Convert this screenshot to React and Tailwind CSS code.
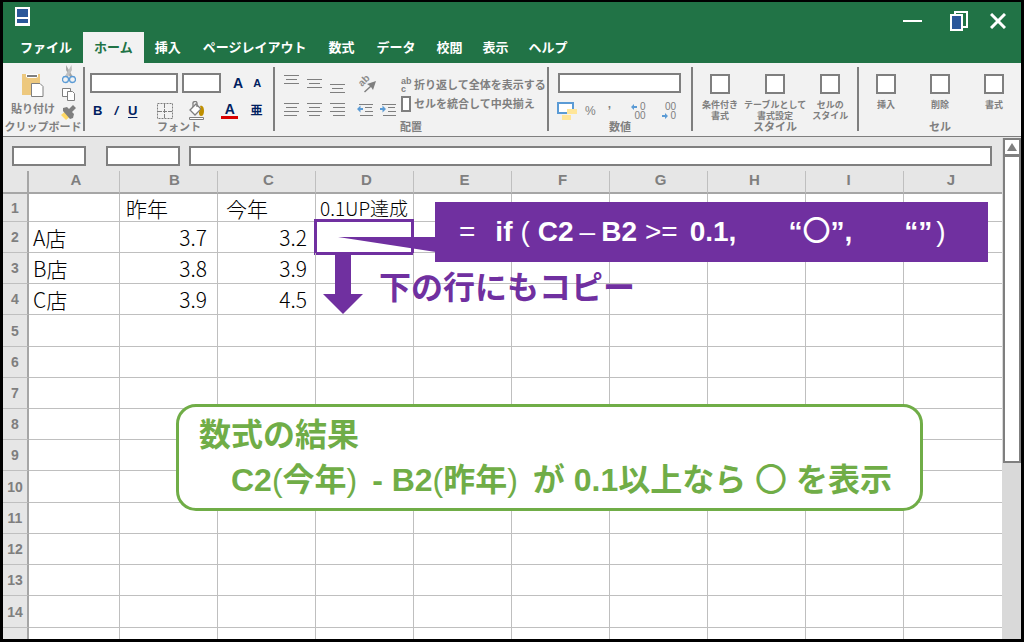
import React, { useState } from "react";

const tabs = [
  { name: "ファイル", pad: "px-[11px]" },
  { name: "ホーム", pad: "px-[11px]" },
  { name: "挿入", pad: "px-[11px]" },
  { name: "ページレイアウト", pad: "px-[11px]" },
  { name: "数式", pad: "px-[11px]" },
  { name: "データ", pad: "px-[11px]" },
  { name: "校閲", pad: "px-[10px]" },
  { name: "表示", pad: "px-[10px]" },
  { name: "ヘルプ", pad: "px-[10px]" },
];

const columns = [
  { name: "A", pad: "pl-1" },
  { name: "B", pad: "pl-3" },
  { name: "C", pad: "pl-1" },
  { name: "D", pad: "pl-1" },
  { name: "E", pad: "pl-1" },
  { name: "F", pad: "pl-1" },
  { name: "G", pad: "pl-1" },
  { name: "H", pad: "pr-1" },
  { name: "I", pad: "pr-3" },
  { name: "J", pad: "pr-1" },
];

const rows = [
  { no: 1, height: "h-7", cells: ["", "昨年", "今年", "0.1UP達成"] },
  { no: 2, height: "h-[31px]", cells: ["A店", "3.7", "3.2"] },
  { no: 3, height: "h-[31px]", cells: ["B店", "3.8", "3.9"] },
  { no: 4, height: "h-[31px]", cells: ["C店", "3.9", "4.5"] },
  { no: 5, height: "h-8", cells: [] },
  { no: 6, height: "h-[31px]", cells: [] },
  { no: 7, height: "h-[31px]", cells: [] },
  { no: 8, height: "h-[31px]", cells: [] },
  { no: 9, height: "h-[31px]", cells: [] },
  { no: 10, height: "h-8", cells: [] },
  { no: 11, height: "h-[31px]", cells: [] },
  { no: 12, height: "h-[31px]", cells: [] },
  { no: 13, height: "h-[31px]", cells: [] },
  { no: 14, height: "h-8", cells: [] },
];

const boxClass = "h-5 border-2 border-[#7f7f7f] bg-white";

// Horizontal line icon, each line is [x1, x2, y]
const LinesIcon = ({ lines, arrow }) => (
  <svg width="16" height="20" viewBox="0 0 16 20" fill="none">
    {lines.map(([x1, x2, y]) => (
      <path key={y} d={`M${x1} ${y}.5H${x2}`} stroke="#7f7f7f" />
    ))}
    {arrow === "left" && <path d="M0 8l3.500-3.500V7H6v2H3.500v2.500z" fill="#5b9bd5" />}
    {arrow === "right" && <path d="M6 8L2.500 4.500V7H0v2h2.500v2.500z" fill="#5b9bd5" />}
  </svg>
);

const SmallArrow = ({ dir }) => (
  <svg width="6" height="6" viewBox="0 0 6 6" fill="#5b9bd5">
    {dir === "left" ? <path d="M0 3l3-3v2h3v2H3v2z" /> : <path d="M6 3L3 0v2H0v2h3v2z" />}
  </svg>
);

const PasteIcon = () => (
  <svg width="22" height="24" viewBox="0 0 22 24">
    <rect x="0" y="1" width="18" height="21" fill="#edc87e" />
    <path d="M4 1h12v3l-2 1H6L4 4z" fill="#fff" />
    <rect x="5" y="2" width="10" height="2" fill="#7f7f7f" />
    <path d="M9.500 10.500h8.500l3 3v10H9.500z" fill="#fff" stroke="#7f7f7f" />
  </svg>
);

const CutIcon = () => (
  <svg width="14" height="19" viewBox="0 0 14 19" fill="none">
    <path d="M4 0l3.500 6 3.500 6H8L4 5z" fill="#a6a6a6" />
    <path d="M9.500 0L6 6l-3.500 6H6l4-7z" fill="#bfbfbf" />
    <circle cx="3.500" cy="14.500" r="3" stroke="#5b9bd5" strokeWidth="1.300" />
    <circle cx="10.500" cy="14.500" r="3" stroke="#5b9bd5" strokeWidth="1.300" />
  </svg>
);

const CopyIcon = () => (
  <svg width="14" height="13" viewBox="0 0 14 13" fill="#fff" stroke="#7f7f7f">
    <path d="M.5.5h8v8h-8z" />
    <path d="M5.500 3.500h5l2 2v7h-7z" />
  </svg>
);

const BrushIcon = () => (
  <svg width="16" height="15" viewBox="0 0 16 15">
    <path d="M0 10l3.500-3 5 5L5 15z" fill="#ffd966" />
    <path d="M2 3l4-1 2 2 4-4 3 3-4 4 2 2-1 4-3 1-7-8z" fill="#7f7f7f" />
  </svg>
);

const BordersIcon = () => (
  <svg width="16" height="17" viewBox="0 0 16 17" fill="none" stroke="#7f7f7f">
    <path d="M.5.5h15v15H.5z" strokeDasharray="2 1" />
    <path d="M7.500 1v15M1 8.500h15" strokeDasharray="4 1" />
  </svg>
);

const BucketIcon = () => (
  <svg width="16" height="20" viewBox="0 0 16 20" fill="none" stroke="#7f7f7f">
    <path d="M7 3l5 5-6 6-5-5z" fill="#fff" strokeWidth="1.300" />
    <path d="M4 6V3a2 2 0 0 1 4-1v4" strokeWidth="1.300" />
    <path d="M11 5c3-1 4 2 4 5s-1 5-3 5-2-3-2-4l2-3z" fill="#bf8f00" stroke="none" />
    <path d="M.5 16.500h14v2H.5z" fill="#fff" />
  </svg>
);

const OrientationIcon = () => (
  <svg width="20" height="20" viewBox="0 0 20 20" overflow="visible">
    <text x="5" y="14" fontSize="10" fontWeight="700" fill="#8c8c8c" transform="rotate(-45 5 14)">
      ab
    </text>
    <path d="M7 18.500l6-5.500-3-2 9-3-3 9-2-3-6 5.500z" fill="#7f7f7f" />
  </svg>
);

const MoneyIcon = () => (
  <svg width="20" height="18" viewBox="0 0 20 18">
    <rect x="1" y="1" width="15" height="10" fill="#fff" stroke="#5b9bd5" strokeWidth="2" />
    <rect x="10" y="7" width="10" height="5" fill="#ffe699" />
    <rect x="5" y="13" width="9" height="5" fill="#ffe699" />
  </svg>
);

const Group = ({ label, className, children }) => (
  <section aria-label={label} className={`flex flex-col justify-between ${className}`}>
    {children}
    <h2 className="text-center text-[11px] leading-2 font-bold whitespace-nowrap">{label}</h2>
  </section>
);

const BoxButton = ({ lines, className = "" }) => (
  <button className={`flex flex-col items-center gap-1.5 ${className}`}>
    <span className={`w-5 ${boxClass}`} />
    <span className="text-[9px] leading-[11px] font-bold whitespace-nowrap">
      {lines.map((line) => (
        <span key={line} className="block">
          {line}
        </span>
      ))}
    </span>
  </button>
);

const TitleBar = () => (
  <div className="flex h-[30px] items-start justify-between pt-[5px] pr-[15px] pl-3">
    <svg width="15" height="19" viewBox="0 0 15 19">
      <rect width="15" height="19" fill="#fff" />
      <rect x="2" y="2" width="11" height="8" fill="#2b579a" />
      <rect x="2" y="12" width="11" height="4" fill="#2b579a" />
    </svg>
    <div className="flex items-center pt-1">
      <button aria-label="最小化">
        <svg width="19" height="20" viewBox="0 0 19 20">
          <rect y="9" width="19" height="2" fill="#fff" />
        </svg>
      </button>
      <button aria-label="元に戻す" className="ml-7">
        <svg width="18" height="20" viewBox="0 0 18 20" stroke="#fff" strokeWidth="2">
          <path d="M5 1h12v15H5z" fill="#217346" />
          <path d="M1 4h11v15H1z" fill="#2b579a" />
        </svg>
      </button>
      <button aria-label="閉じる" className="ml-[22px]">
        <svg width="16" height="16" viewBox="0 0 16 16" stroke="#fff" strokeWidth="3">
          <path d="M1 1l14 14M15 1L1 15" />
        </svg>
      </button>
    </div>
  </div>
);

const Ribbon = () => (
  <div className="flex border-b border-[#7f7f7f] bg-[#f2f2f2] pt-1 pb-[5px] text-[#7f7f7f]">
    <Group label="クリップボード" className="h-16 w-[82px] border-r-2 border-[#7f7f7f]">
      <div className="flex gap-1.5 pl-2">
        <button className="flex flex-col items-center gap-1 pt-1.5 text-[11px] leading-4 font-bold whitespace-nowrap">
          <PasteIcon />
          貼り付け
        </button>
        <div className="-mt-0.5 flex flex-col items-center gap-1">
          <button aria-label="切り取り">
            <CutIcon />
          </button>
          <button aria-label="コピー">
            <CopyIcon />
          </button>
          <button aria-label="書式のコピー">
            <BrushIcon />
          </button>
        </div>
      </div>
    </Group>

    <Group label="フォント" className="h-16 w-[190px] border-r-2 border-[#7f7f7f] pt-1.5">
      <div className="flex h-5 items-center pl-[5px] text-[#002060]">
        <input aria-label="フォント名" className={`w-[88px] ${boxClass}`} />
        <input aria-label="フォントサイズ" className={`ml-1 w-[39px] ${boxClass}`} />
        <button className="ml-3 text-[14px] font-bold">A</button>
        <button className="ml-2.5 text-[11px] font-bold">A</button>
      </div>
      <div className="flex h-6 items-center pt-1.5 pl-2 text-[13px] leading-4 font-bold text-[#002060]">
        <button>B</button>
        <button className="ml-3 italic">/</button>
        <button className="ml-2.5 underline underline-offset-2">U</button>
        <button aria-label="罫線" className="ml-5">
          <BordersIcon />
        </button>
        <button aria-label="塗りつぶし" className="ml-4">
          <BucketIcon />
        </button>
        <button className="ml-4 w-[17px] border-b-3 border-[#d90000] text-[14px] leading-[13px]">A</button>
        <button className="ml-3 text-[12px]">亜</button>
      </div>
    </Group>

    <Group label="配置" className="h-16 w-[274px] border-r-2 border-[#7f7f7f] pt-1.5">
      <div className="flex pl-[9px]">
        <div className="flex w-[117px] flex-col gap-2">
          <div className="flex h-5 gap-[7px]">
            <button aria-label="上揃え">
              <LinesIcon lines={[[0, 15, 2], [2, 13, 6], [0, 15, 10]]} />
            </button>
            <button aria-label="上下中央揃え">
              <LinesIcon lines={[[0, 15, 6], [2, 13, 10], [0, 15, 14]]} />
            </button>
            <button aria-label="下揃え">
              <LinesIcon lines={[[0, 15, 11], [2, 13, 15], [0, 15, 19]]} />
            </button>
            <button aria-label="方向" className="ml-1">
              <OrientationIcon />
            </button>
          </div>
          <div className="flex h-5 gap-[7px]">
            <button aria-label="左揃え">
              <LinesIcon lines={[[0, 15, 2], [2, 13, 6], [0, 15, 10], [0, 13, 14]]} />
            </button>
            <button aria-label="中央揃え">
              <LinesIcon lines={[[0, 15, 2], [2, 13, 6], [0, 15, 10], [2, 13, 14]]} />
            </button>
            <button aria-label="右揃え">
              <LinesIcon lines={[[0, 15, 2], [3, 15, 6], [0, 15, 10], [3, 15, 14]]} />
            </button>
            <button aria-label="インデントを減らす" className="ml-1">
              <LinesIcon arrow="left" lines={[[2, 16, 3], [8, 15, 6], [8, 16, 10], [3, 16, 14]]} />
            </button>
            <button aria-label="インデントを増やす">
              <LinesIcon arrow="right" lines={[[2, 16, 3], [8, 15, 6], [8, 16, 10], [3, 16, 14]]} />
            </button>
          </div>
        </div>
        <div className="flex flex-col gap-[3px] pt-1 text-[11px] leading-4 font-bold whitespace-nowrap">
          <button className="flex items-center">
            <span className="w-[13px] text-left text-[9px] leading-2">
              ab
              <br />c
            </span>
            折り返して全体を表示する
          </button>
          <button className="flex items-center gap-[3px]">
            <span className="h-4 w-2.5 border-2 border-[#7f7f7f] bg-white" />
            セルを統合して中央揃え
          </button>
        </div>
      </div>
    </Group>

    <Group label="数値" className="h-16 w-[144px] border-r-2 border-[#7f7f7f] pt-1.5">
      <div className="flex pr-2.5 pl-[9px]">
        <input aria-label="表示形式" className={`w-full ${boxClass}`} />
      </div>
      <div className="flex h-6 items-center pt-1.5 pl-2 text-[12px] leading-4">
        <button aria-label="通貨">
          <MoneyIcon />
        </button>
        <button className="ml-2">%</button>
        <button className="ml-3 font-bold">’</button>
        <button className="ml-5 flex flex-col items-end text-[10px] leading-[9px]">
          <span className="flex items-center gap-[3px]">
            <SmallArrow dir="left" />0
          </span>
          <span>00</span>
        </button>
        <button className="ml-4 flex flex-col items-end text-[10px] leading-[9px]">
          <span>00</span>
          <span className="flex items-center gap-[3px]">
            <SmallArrow dir="right" />0
          </span>
        </button>
      </div>
    </Group>

    <Group label="スタイル" className="h-16 w-[166px] border-r-2 border-[#7f7f7f] pt-[7px]">
      <div className="flex gap-1.5 pl-[9px]">
        <BoxButton lines={["条件付き", "書式"]} />
        <BoxButton lines={["テーブルとして", "書式設定"]} />
        <BoxButton lines={["セルの", "スタイル"]} />
      </div>
    </Group>

    <Group label="セル" className="h-16 flex-1 pt-[7px]">
      <div className="flex">
        <BoxButton lines={["挿入"]} className="flex-1" />
        <BoxButton lines={["削除"]} className="flex-1" />
        <BoxButton lines={["書式"]} className="flex-1" />
      </div>
    </Group>
  </div>
);

const cellClass = (row, col) => {
  if (row === 1) {
    if (col === 3) return "pl-1 text-[19px]";
    return col === 1 ? "pl-1.5 text-[21px]" : "pl-2 text-[21px]";
  }
  if (col === 0) return "pl-1 text-[21px]";
  return col === 1 ? "pr-2.5 text-right text-[21px]" : "pr-2 text-right text-[21px]";
};

const Sheet = () => (
  <table className="w-full table-fixed border-separate border-spacing-0 bg-white">
    <thead>
      <tr className="h-[23px] bg-[#e6e6e6] text-[15px] leading-[18px] text-[#7f7f7f]">
        <th className="w-[26px] border-r-2 border-b-2 border-[#a6a6a6] p-0" />
        {columns.map((col) => (
          <th
            key={col.name}
            className={`border-r border-b-2 border-r-[#bfbfbf] border-b-[#a6a6a6] p-0 align-top font-bold last:border-r-0 ${col.pad} ${col.name === "A" ? "w-[91px]" : ""}`}
          >
            {col.name}
          </th>
        ))}
      </tr>
    </thead>
    <tbody>
      {rows.map((row) => (
        <tr key={row.no} className={row.height}>
          <th className="border-r-2 border-b border-r-[#a6a6a6] border-b-[#bfbfbf] bg-[#e6e6e6] p-0 text-[14px] leading-4 font-bold text-[#7f7f7f]">
            {row.no}
          </th>
          {columns.map((col, index) => (
            <td
              key={col.name}
              className={`relative border-r border-b border-[#bfbfbf] p-0 font-['Noto_Sans_CJK_JP',sans-serif] leading-5 font-light whitespace-nowrap text-black last:border-r-0 ${cellClass(row.no, index)}`}
            >
              {row.cells[index]}
              {/* Selected cell */}
              {row.no === 2 && col.name === "D" && (
                <span className="absolute -top-[3px] -right-px -bottom-[3px] -left-0.5 border-3 border-[#7030a0]" />
              )}
            </td>
          ))}
        </tr>
      ))}
      <tr className="h-[11px]">
        <th className="border-r-2 border-[#a6a6a6] bg-[#e6e6e6] p-0" />
        {columns.map((col) => (
          <td key={col.name} className="border-r border-[#bfbfbf] p-0 last:border-r-0" />
        ))}
      </tr>
    </tbody>
  </table>
);

// Notes placed on top of the sheet
const Annotations = () => (
  <>
    <svg className="absolute top-[66px] left-[335px]" width="98" height="16" viewBox="0 0 98 16" fill="#7030a0">
      <path d="M0 0h98v15z" />
    </svg>
    <p className="absolute top-[31px] left-[432px] flex h-[60px] w-[553px] items-center bg-[#7030a0] pl-6 text-[28px] leading-8 font-bold whitespace-pre text-white">
      <span className="font-light">=</span>
      <span className="ml-5">if</span>
      <span className="ml-2 font-light">(</span>
      <span className="ml-2">C2</span>
      <span className="ml-1.5 font-light">–</span>
      <span className="ml-1.5">B2</span>
      <span className="ml-2 font-light">&gt;=</span>
      <span className="ml-3">0.1,</span>
      <span className="ml-13">
        “<span className="font-medium">〇</span>”,
      </span>
      <span className="ml-13">“”</span>
      <span className="ml-1 font-light">)</span>
    </p>
    <svg className="absolute top-[83px] left-80" width="40" height="60" viewBox="0 0 40 60" fill="#7030a0">
      <path d="M12 0h16v40h12L20 60 0 40h12z" />
    </svg>
    <p className="absolute top-[97px] left-[376px] text-[32px] leading-10 font-bold whitespace-nowrap text-[#7030a0]">
      下の行にもコピー
    </p>
    <div className="absolute top-[233px] left-[173px] h-[107px] w-[747px] rounded-[20px] border-3 border-[#70ad47] bg-white pt-1.5 pl-5 text-[32px] leading-[45px] font-bold whitespace-nowrap text-[#70ad47]">
      <p>数式の結果</p>
      <p className="pl-8">
        C2<span className="font-light">(</span>今年<span className="mr-1.5 font-light">)</span> - B2
        <span className="font-light">(</span>昨年<span className="mr-1.5 font-light">)</span> が 0.1以上なら{" "}
        <span className="font-medium">〇</span> を表示
      </p>
    </div>
  </>
);

const ScrollBar = () => (
  <div className="mt-px flex w-[19px] flex-col bg-[#d9d9d9] pl-px">
    <button aria-label="上へスクロール" className="flex h-[18px] items-center justify-center border-2 border-[#7f7f7f] bg-white">
      <svg width="10" height="8" viewBox="0 0 10 8" fill="#7f7f7f">
        <path d="M5 0l5 8H0z" />
      </svg>
    </button>
    <div className="-mt-px h-[308px] border-2 border-[#7f7f7f] bg-white" />
  </div>
);

const App = () => {
  const [activeTab, setActiveTab] = useState("ホーム");

  return (
    <div
      className="min-h-screen bg-black px-[3px] pt-0.5 pb-[3px] font-['Liberation_Sans','Noto_Sans_CJK_JP',sans-serif]"
      lang="ja"
    >
      <header className="bg-[#217346]">
        <TitleBar />
        <nav className="flex h-[31px] pl-1.5">
          {tabs.map((tab) => (
            <button
              key={tab.name}
              onClick={() => setActiveTab(tab.name)}
              className={`text-[13px] leading-4 font-bold whitespace-nowrap ${tab.pad} ${
                activeTab === tab.name ? "bg-[#f2f2f2] text-[#217346]" : "text-white"
              }`}
            >
              {tab.name}
            </button>
          ))}
        </nav>
      </header>

      <Ribbon />

      <main className="flex bg-[#e6e6e6]">
        <div className="min-w-0 flex-1">
          <div className="flex pt-[9px] pr-2.5 pb-[5px] pl-[9px]">
            <input aria-label="名前ボックス" className={`w-[74px] ${boxClass}`} />
            <input aria-label="関数" className={`ml-5 w-[74px] ${boxClass}`} />
            <input aria-label="数式バー" className={`ml-[9px] min-w-0 flex-1 ${boxClass}`} />
          </div>
          <div className="relative">
            <Sheet />
            <Annotations />
          </div>
        </div>
        <ScrollBar />
      </main>
    </div>
  );
};

export default App;
